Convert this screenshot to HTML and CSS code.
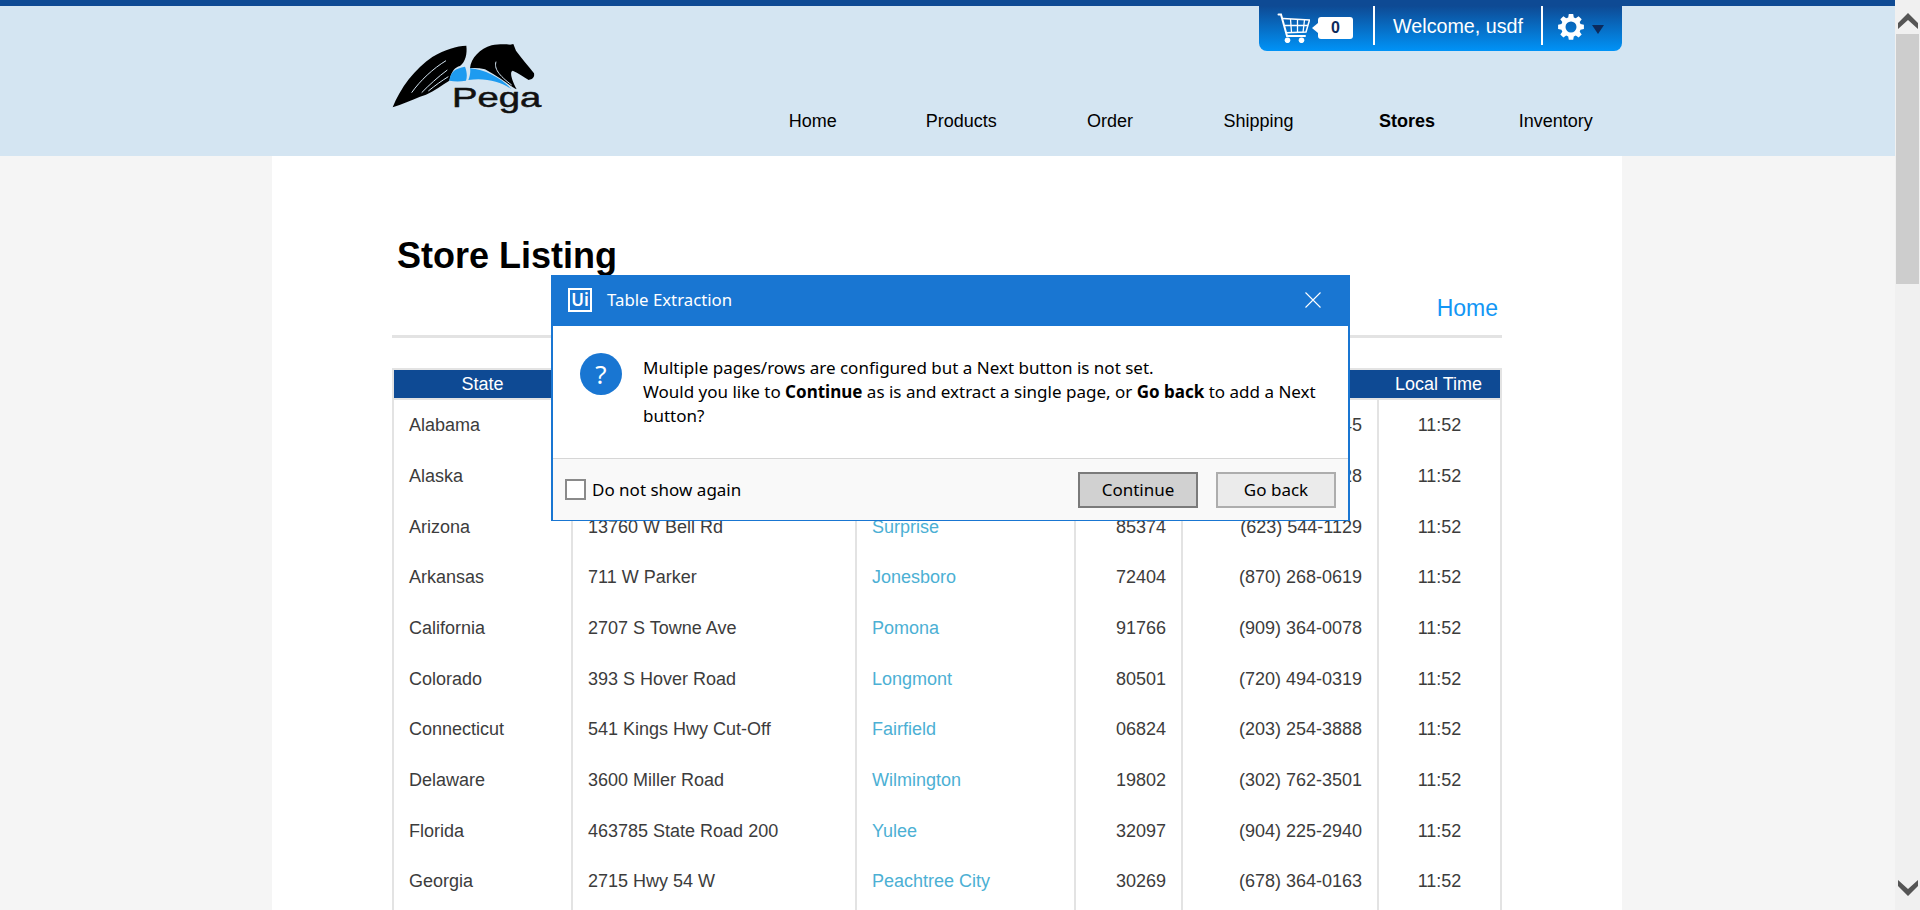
FILE: index.html
```html
<!DOCTYPE html>
<html lang="en">
<head>
    <meta charset="UTF-8">
    <meta name="viewport" content="width=device-width, initial-scale=1.0">
    <title>Store Listing</title>
    <link rel="stylesheet" href="styles.css">
</head>
<body>
    <div class="page">
        <div class="site">
            <header class="site-header">
                <div class="header-inner">
                    <div class="user-bar">
                        <div class="cart">
                            <svg class="cart-icon" viewBox="17 13 33 30" fill="none" stroke="#fff">
                                <path d="M18.500 14.500h2.500L27 36h18" stroke-width="2" stroke-linecap="round"/>
                                <path d="M23 18.500l26.500 1.500-3.500 12-19.500.7" stroke-width="1.500"/>
                                <path d="M30.500 19l1 13.500M37.500 19.500v13M44.500 20l-1.500 12.500M25 25.500h23" stroke-width="1.300"/>
                                <circle cx="27.500" cy="40.300" r="2.800" fill="#fff" stroke="none"/>
                                <circle cx="41.500" cy="40.300" r="2.800" fill="#fff" stroke="none"/>
                            </svg>
                            <span class="cart-count">0</span>
                        </div>
                        <div class="welcome">Welcome, usdf</div>
                        <div class="settings">
                            <svg class="gear" viewBox="0 0 26 26">
                                <path fill="#fff" fill-rule="evenodd" d="M10.800 0h4.400l.6 3.400 2 .8 2.800-2 3.100 3.100-2 2.800.8 2 3.400.6v4.400l-3.400.6-.8 2 2 2.800-3.100 3.100-2.800-2-2 .8-.6 3.400h-4.400l-.6-3.400-2-.8-2.800 2-3.100-3.100 2-2.800-.8-2-3.400-.6v-4.400l3.400-.6.8-2-2-2.800 3.100-3.100 2.800 2 2-.8zM13 7.500a5.500 5.500 0 1 0 0 11 5.500 5.500 0 0 0 0-11z"/>
                            </svg>
                            <span class="caret"></span>
                        </div>
                    </div>
                    <div class="brand-row">
                        <svg class="logo" viewBox="0 0 600 300">
                            <path fill="#000" d="M68 232C90 175 135 115 188 80 225 58 260 48 289 47 292 70 287 95 270 108 255 112 245 122 238 152 215 166 195 182 168 194L150 200C125 210 95 224 68 232z"/>
                            <path fill="none" stroke="#d4e5f2" stroke-width="3" d="M125 188C150 152 190 115 228 92M155 188C175 167 205 140 232 120M175 183C195 167 215 152 235 140"/>
                            <path fill="#000" d="M300 115C303 85 330 55 365 46 385 42 405 42 420 44L430 42 438 62C455 85 475 108 492 130 494 140 490 148 476 150 462 142 445 128 428 122 418 125 425 150 440 178 425 172 400 148 345 118 330 115 315 113 300 115z"/>
                            <path fill="none" stroke="#d4e5f2" stroke-width="3" d="M378 95C372 115 385 135 425 165"/>
                            <path fill="#1e9bf0" d="M238 152C242 125 255 115 285 110 291 125 292 140 288 152 270 155 255 155 238 152zM300 115C345 118 395 145 425 178 395 155 345 142 295 150 300 138 302 125 300 115z"/>
                            <text class="logo-name" x="246" y="232" font-size="82" textLength="268" lengthAdjust="spacingAndGlyphs">Pega</text>
                        </svg>
                        <nav class="main-nav">
                            <a href="#">Home</a>
                            <a href="#">Products</a>
                            <a href="#">Order</a>
                            <a href="#">Shipping</a>
                            <a href="#" class="active">Stores</a>
                            <a href="#">Inventory</a>
                        </nav>
                    </div>
                </div>
            </header>

            <main class="content">
                <h1>Store Listing</h1>
                <div class="home-link"><a href="#">Home</a></div>
                <table class="stores">
                    <thead>
                        <tr>
                            <th class="col-state">State</th>
                            <th class="col-address">Address</th>
                            <th class="col-city">City</th>
                            <th class="col-zip">Zip</th>
                            <th class="col-phone">Phone</th>
                            <th class="col-time">Local Time</th>
                        </tr>
                    </thead>
                    <tbody id="storeRows"></tbody>
                </table>
            </main>
        </div>

        <aside class="scrollbar">
            <div class="scroll-btn scroll-up"><svg viewBox="0 0 20 16"><path d="M0 16V10L10 0l10 10v6l-10-9z"/></svg></div>
            <div class="scroll-track"><div class="scroll-thumb"></div></div>
            <div class="scroll-btn scroll-down"><svg viewBox="0 0 20 16"><path d="M0 0v6l10 10L20 6V0l-10 9z"/></svg></div>
        </aside>
    </div>

    <div class="dialog">
        <div class="dialog-title">
            <span class="ui-badge">Ui</span>
            <span class="dialog-name">Table Extraction</span>
            <svg class="dialog-close" viewBox="0 0 16 16" fill="none" stroke="#fff" stroke-width="1.100"><path d="M.5.5l15 15M15.500.5l-15 15"/></svg>
        </div>
        <div class="dialog-body">
            <div class="question">?</div>
            <p>Multiple pages/rows are configured but a Next button is not set.<br>Would you like to <strong>Continue</strong> as is and extract a single page, or <strong>Go back</strong> to add a Next button?</p>
        </div>
        <div class="dialog-footer">
            <label class="show-again"><span class="box"></span>Do not show again</label>
            <div class="dialog-buttons">
                <button class="primary">Continue</button>
                <button>Go back</button>
            </div>
        </div>
    </div>

    <script>
        // Rows of the store table
        const stores = [
            ['Alabama', '1551 Montgomery Hwy', 'Hoover', '35216', '(205) 979-2245'],
            ['Alaska', '800 E Dimond Blvd', 'Anchorage', '99515', '(907) 344-3328'],
            ['Arizona', '13760 W Bell Rd', 'Surprise', '85374', '(623) 544-1129'],
            ['Arkansas', '711 W Parker', 'Jonesboro', '72404', '(870) 268-0619'],
            ['California', '2707 S Towne Ave', 'Pomona', '91766', '(909) 364-0078'],
            ['Colorado', '393 S Hover Road', 'Longmont', '80501', '(720) 494-0319'],
            ['Connecticut', '541 Kings Hwy Cut-Off', 'Fairfield', '06824', '(203) 254-3888'],
            ['Delaware', '3600 Miller Road', 'Wilmington', '19802', '(302) 762-3501'],
            ['Florida', '463785 State Road 200', 'Yulee', '32097', '(904) 225-2940'],
            ['Georgia', '2715 Hwy 54 W', 'Peachtree City', '30269', '(678) 364-0163'],
            ['', '', '', '', '']
        ];

        document.getElementById('storeRows').innerHTML = stores.map(s => `
            <tr>
                <td>${s[0]}</td>
                <td>${s[1]}</td>
                <td><a href="#">${s[2]}</a></td>
                <td class="num">${s[3]}</td>
                <td class="num">${s[4]}</td>
                <td class="center">${s[0] ? '11:52' : ''}</td>
            </tr>
        `).join('');
    </script>
</body>
</html>
```

FILE: styles.css
```css
html, body {
    margin: 0;
    height: 100%;
    overflow: hidden;
}

body {
    font-family: "Liberation Sans", Arial, sans-serif;
    background-color: #f5f5f5;
    color: #3c3c3c;
}

.page {
    display: flex;
    height: 910px;
}

.site {
    flex: 1;
    min-width: 0;
    overflow: hidden;
}

/* Header */
.site-header {
    height: 150px;
    border-top: 6px solid #0e4a94;
    background-color: #d4e5f2;
}

.header-inner {
    width: 1350px;
    margin-left: 272px;
    height: 100%;
    display: flex;
    flex-direction: column;
}

.user-bar {
    align-self: flex-end;
    flex-shrink: 0;
    display: flex;
    align-items: flex-start;
    height: 45px;
    width: 363px;
    box-sizing: border-box;
    background: linear-gradient(#0e4a94, #0093f7);
    border-radius: 0 0 8px 8px;
    color: #fff;
}

.cart {
    display: flex;
    align-items: center;
    width: 114px;
    padding: 7px 0 0 18px;
    box-sizing: border-box;
    height: 37px;
}

.cart-icon {
    width: 33px;
    height: 30px;
}

.cart-count {
    position: relative;
    width: 35px;
    height: 22px;
    line-height: 22px;
    margin-left: 8px;
    background-color: #fff;
    border-radius: 3px;
    color: #0c2a5c;
    font-size: 16px;
    font-weight: bold;
    text-align: center;
}

.cart-count::before {
    content: "";
    position: absolute;
    left: -6px;
    top: 6px;
    border-top: 5px solid transparent;
    border-bottom: 5px solid transparent;
    border-right: 6px solid #fff;
}

.welcome {
    width: 170px;
    height: 39px;
    line-height: 40px;
    box-sizing: border-box;
    border-left: 2px solid #fff;
    border-right: 2px solid #fff;
    font-size: 19.700px;
    text-align: center;
}

.settings {
    display: flex;
    align-items: center;
    gap: 8px;
    padding: 8px 0 0 15px;
}

.gear {
    width: 26px;
    height: 26px;
}

.caret {
    margin-top: 5px;
    border-left: 6px solid transparent;
    border-right: 6px solid transparent;
    border-top: 9px solid #0c2a5c;
}

.brand-row {
    flex: 1;
    display: flex;
    align-items: flex-end;
    justify-content: space-between;
    padding-bottom: 24px;
}

.logo {
    align-self: flex-start;
    width: 200px;
    height: 100px;
    margin: -21px 0 0 98px;
}

.logo-name {
    font-family: "Liberation Sans", Arial, sans-serif;
    fill: #111;
    stroke: #111;
    stroke-width: 1.500px;
}

.main-nav {
    display: flex;
    margin-right: -8px;
}

.main-nav a {
    width: 148.600px;
    text-align: center;
    color: #000;
    font-size: 18px;
    text-decoration: none;
}

.main-nav a.active {
    font-weight: bold;
}

/* Page content */
.content {
    width: 1350px;
    margin-left: 272px;
    height: 754px;
    box-sizing: border-box;
    background-color: #fff;
    padding: 78px 120px 0 120px;
}

.content h1 {
    margin: 0 0 0 5px;
    font-size: 36px;
    line-height: 44px;
    color: #000;
}

.home-link {
    text-align: right;
    font-size: 23px;
    padding: 17px 4px 14px 0;
    line-height: 26px;
    border-bottom: 3px solid #e3e3e3;
}

.home-link a {
    color: #1296f5;
    text-decoration: none;
}

.stores {
    width: 1110px;
    margin-top: 30px;
    border-collapse: separate;
    border-spacing: 0;
    table-layout: fixed;
    border: 2px solid #e3e3e3;
    border-bottom: 0;
    font-size: 18px;
}

.stores th {
    height: 28px;
    padding: 0;
    background-color: #0e4a94;
    border-bottom: 2px solid #e3e3e3;
    color: #fff;
    font-weight: normal;
    font-size: 18px;
}

.col-state { width: 177px; }
.col-address { width: 284px; }
.col-city { width: 219px; }
.col-zip { width: 107px; }
.col-phone { width: 196px; }

.stores td {
    height: 50.680px;
    padding: 1px 15px 0;
    box-sizing: border-box;
    border-left: 2px solid #e3e3e3;
    white-space: nowrap;
}

.stores td:first-child {
    border-left: 0;
}

.stores td a {
    color: #4cb0d4;
    text-decoration: none;
}

.stores td.num {
    text-align: right;
}

.stores td.center {
    text-align: center;
}

/* Scrollbar */
.scrollbar {
    width: 25px;
    display: flex;
    flex-direction: column;
    background-color: #f0f0f0;
}

.scroll-btn {
    height: 34px;
    box-sizing: border-box;
    display: flex;
    justify-content: center;
}

.scroll-up {
    padding-top: 13px;
}

.scroll-down {
    padding-top: 4px;
}

.scroll-btn svg {
    width: 20px;
    height: 16px;
    fill: #555;
}

.scroll-track {
    flex: 1;
    padding-left: 1px;
}

.scroll-thumb {
    width: 23px;
    height: 250px;
    background-color: #cdcdcd;
}

/* Extraction dialog */
.dialog {
    position: absolute;
    left: 551px;
    top: 275px;
    width: 799px;
    height: 246px;
    box-sizing: border-box;
    display: flex;
    flex-direction: column;
    background-color: #fff;
    border: 1px solid #1976d2;
    border-width: 1px 2px 1px 2px;
    font-family: "Noto Sans", "Open Sans", sans-serif;
    color: #000;
}

.dialog-title {
    height: 50px;
    box-sizing: border-box;
    flex-shrink: 0;
    display: flex;
    align-items: center;
    background-color: #1976d2;
    color: #fff;
    padding: 0 27px 3px 15px;
    font-size: 16.800px;
}

.ui-badge {
    width: 24px;
    height: 24px;
    line-height: 20px;
    box-sizing: border-box;
    border: 2px solid #fff;
    text-align: center;
    font-size: 17px;
    font-weight: 600;
}

.dialog-name {
    flex: 1;
    margin-left: 15px;
}

.dialog-close {
    width: 16px;
    height: 16px;
}

.dialog-body {
    flex: 1;
    display: flex;
    padding: 27px 20px 0 27px;
}

.question {
    width: 42px;
    height: 42px;
    line-height: 42px;
    flex-shrink: 0;
    border-radius: 50%;
    background-color: #1976d2;
    color: #fff;
    text-align: center;
    font-size: 26px;
}

.dialog-body p {
    margin: 3px 0 0 21px;
    font-size: 17px;
    line-height: 24px;
}

.dialog-footer {
    height: 62px;
    flex-shrink: 0;
    box-sizing: border-box;
    display: flex;
    align-items: center;
    justify-content: space-between;
    background-color: #f9f9f9;
    border-top: 1px solid #d6d6d6;
    padding: 0 12px 0 12px;
    font-size: 17px;
}

.show-again {
    display: flex;
    align-items: center;
}

.box {
    width: 17px;
    height: 17px;
    margin-right: 6px;
    background-color: #fff;
    border: 2px solid #8a8a8a;
}

.dialog-buttons {
    display: flex;
    gap: 18px;
}

.dialog-buttons button {
    width: 120px;
    height: 36px;
    padding: 0;
    background-color: #ebebeb;
    border: 2px solid #adadad;
    color: #000;
    font-family: inherit;
    font-size: 17px;
}

.dialog-buttons button.primary {
    background-color: #d1d1d1;
    border-color: #7a7a7a;
}
```
